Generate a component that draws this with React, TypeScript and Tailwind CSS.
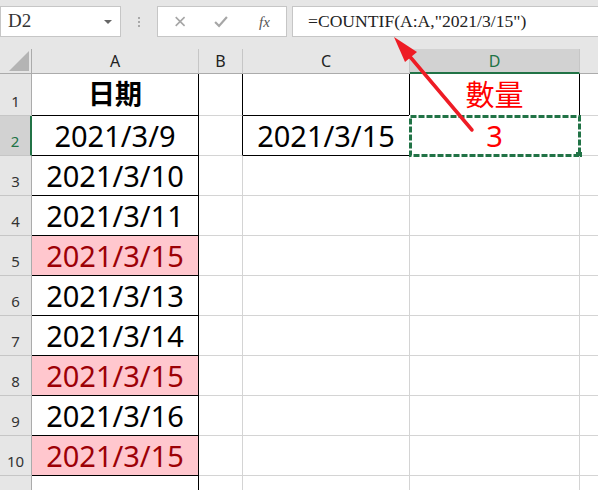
import React from "react";

type Cell = { text?: string; bold?: boolean; pink?: boolean };

const font = { fontFamily: '"Noto Sans", "Noto Sans CJK TC", sans-serif' };
const serif = { fontFamily: '"Liberation Serif", serif' };

const colA: Cell[] = [
    { text: "日期", bold: true },
    { text: "2021/3/9" },
    { text: "2021/3/10" },
    { text: "2021/3/11" },
    { text: "2021/3/15", pink: true },
    { text: "2021/3/13" },
    { text: "2021/3/14" },
    { text: "2021/3/15", pink: true },
    { text: "2021/3/16" },
    { text: "2021/3/15", pink: true },
];

function ColHeader({ label, active, last }: { label: string; active?: boolean; last?: boolean }) {
    return (
        <div
            className={
                "flex items-center justify-center text-[16px] " +
                (last ? "" : "border-r border-r-[#c6c6c6] ") +
                (active
                    ? "bg-[#d2d2d2] text-[#217346] border-b-2 border-b-[#217346]"
                    : "bg-[#e6e6e6] text-[#222] border-b border-b-[#ababab]")
            }
        >
            {label}
        </div>
    );
}

function RowHeader({ n, active }: { n: number; active?: boolean }) {
    return (
        <div
            className={
                "flex items-end justify-center pb-[3px] text-[15px] border-b border-b-[#c6c6c6] " +
                (active
                    ? "bg-[#d2d2d2] text-[#217346] border-r-2 border-r-[#217346]"
                    : "bg-[#e6e6e6] text-[#333] border-r border-r-[#ababab]")
            }
        >
            {n}
        </div>
    );
}

export default function App() {
    const rows = Array.from({ length: 10 }, (_, i) => i + 1);

    return (
        <div className="relative w-[598px] h-[490px] overflow-hidden bg-white select-none" style={font}>
            {/* formula bar */}
            <div className="h-[37px] bg-[#e6e6e6] flex items-start pt-[6px]">
                <div className="w-[121px] h-[31px] bg-white border border-[#c6c6c6] flex items-center justify-between pl-[7px] pr-[8px]">
                    <span className="text-[19px] text-[#333]" style={serif}>
                        D2
                    </span>
                    <span className="w-0 h-0 border-l-[4px] border-r-[4px] border-t-[4px] border-l-transparent border-r-transparent border-t-[#666]" />
                </div>
                <div className="w-[36px] h-[31px] flex flex-col items-center justify-center gap-[2px]">
                    <span className="w-[2px] h-[2px] bg-[#a8a8a8]" />
                    <span className="w-[2px] h-[2px] bg-[#a8a8a8]" />
                    <span className="w-[2px] h-[2px] bg-[#a8a8a8]" />
                </div>
                <div className="relative w-[130px] h-[31px] bg-white border border-[#c6c6c6] flex items-center">
                    <svg width="130" height="29" viewBox="0 0 130 29">
                        <path d="M18 10 L27 19 M27 10 L18 19" stroke="#a6a6a6" strokeWidth="1.6" />
                        <path d="M58 15 L62 19 L70 10" stroke="#a6a6a6" strokeWidth="2.2" fill="none" />
                    </svg>
                    <span className="absolute left-[101px] top-[4px] text-[15px] italic text-[#555]" style={serif}>
                        fx
                    </span>
                </div>
                <div className="w-[5px]" />
                <div className="flex-1 h-[31px] bg-white border border-[#c6c6c6] border-r-0 flex items-center pl-[15px]">
                    <span className="text-[17.6px] text-[#222]" style={serif}>
                        =COUNTIF(A:A,"2021/3/15")
                    </span>
                </div>
            </div>
            <div className="h-[12px] bg-[#e6e6e6]" />

            {/* sheet grid */}
            <div className="grid grid-cols-[32px_167px_44px_167px_170px_18px] grid-rows-[25px_42px_repeat(9,40px)_20px]">
                <div className="bg-[#e6e6e6] border-r border-r-[#ababab] border-b border-b-[#ababab] flex items-end justify-end pr-[2px] pb-[2px]">
                    <svg width="20" height="20" viewBox="0 0 20 20">
                        <polygon points="20,0 20,20 0,20" fill="#b4b4b4" />
                    </svg>
                </div>
                <ColHeader label="A" />
                <ColHeader label="B" />
                <ColHeader label="C" />
                <ColHeader label="D" active />
                <ColHeader label="" last />

                {rows.map((r) => {
                    const a = colA[r - 1];
                    return (
                        <React.Fragment key={r}>
                            <RowHeader n={r} active={r === 2} />
                            <div
                                className={
                                    "flex items-center justify-center border-r border-b border-black " +
                                    (a.pink ? "bg-[#ffc7ce] text-[#9c0006] " : "text-black ") +
                                    (a.bold ? "font-bold text-[27px]" : "text-[29px]")
                                }
                            >
                                {a.text}
                            </div>
                            <div
                                className={
                                    "border-b border-b-[#d4d4d4] border-r " +
                                    (r <= 2 ? "border-r-black" : "border-r-[#d4d4d4]")
                                }
                            />
                            <div
                                className={
                                    "flex items-center justify-center text-[29px] text-black border-r border-b " +
                                    (r <= 2 ? "border-black" : "border-[#d4d4d4]")
                                }
                            >
                                {r === 2 ? "2021/3/15" : ""}
                            </div>
                            <div
                                className={
                                    "relative flex items-center justify-center text-[29px] text-[#ff0000] border-r border-b " +
                                    (r === 1 ? "border-black" : "border-[#d4d4d4]")
                                }
                            >
                                {r === 1 ? "數量" : r === 2 ? "3" : ""}
                                {r === 2 && (
                                    <svg className="absolute -left-[1px] -top-[1px]" width="173" height="42" viewBox="0 0 173 42">
                                        <rect x="1.5" y="1.5" width="169" height="39" fill="none" stroke="#ffffff" strokeWidth="3" />
                                        <rect x="1.5" y="1.5" width="169" height="39" fill="none" stroke="#217346" strokeWidth="3" strokeDasharray="6 2" />
                                        <rect x="167" y="37" width="6" height="5" fill="#217346" />
                                    </svg>
                                )}
                            </div>
                            <div className="border-b border-b-[#d4d4d4]" />
                        </React.Fragment>
                    );
                })}

                <div className="bg-[#e6e6e6] border-r border-r-[#ababab]" />
                <div className="border-r border-r-black" />
                <div className="border-r border-r-[#d4d4d4]" />
                <div className="border-r border-r-[#d4d4d4]" />
                <div className="border-r border-r-[#d4d4d4]" />
                <div />
            </div>

            {/* red arrow annotation */}
            <svg className="absolute inset-0 pointer-events-none" width="598" height="490" viewBox="0 0 598 490">
                <line x1="472" y1="130" x2="406" y2="52" stroke="#ee1c25" strokeWidth="3.5" strokeLinecap="round" />
                <polygon points="394,37 417,52 405,62" fill="#ee1c25" />
            </svg>
        </div>
    );
}
